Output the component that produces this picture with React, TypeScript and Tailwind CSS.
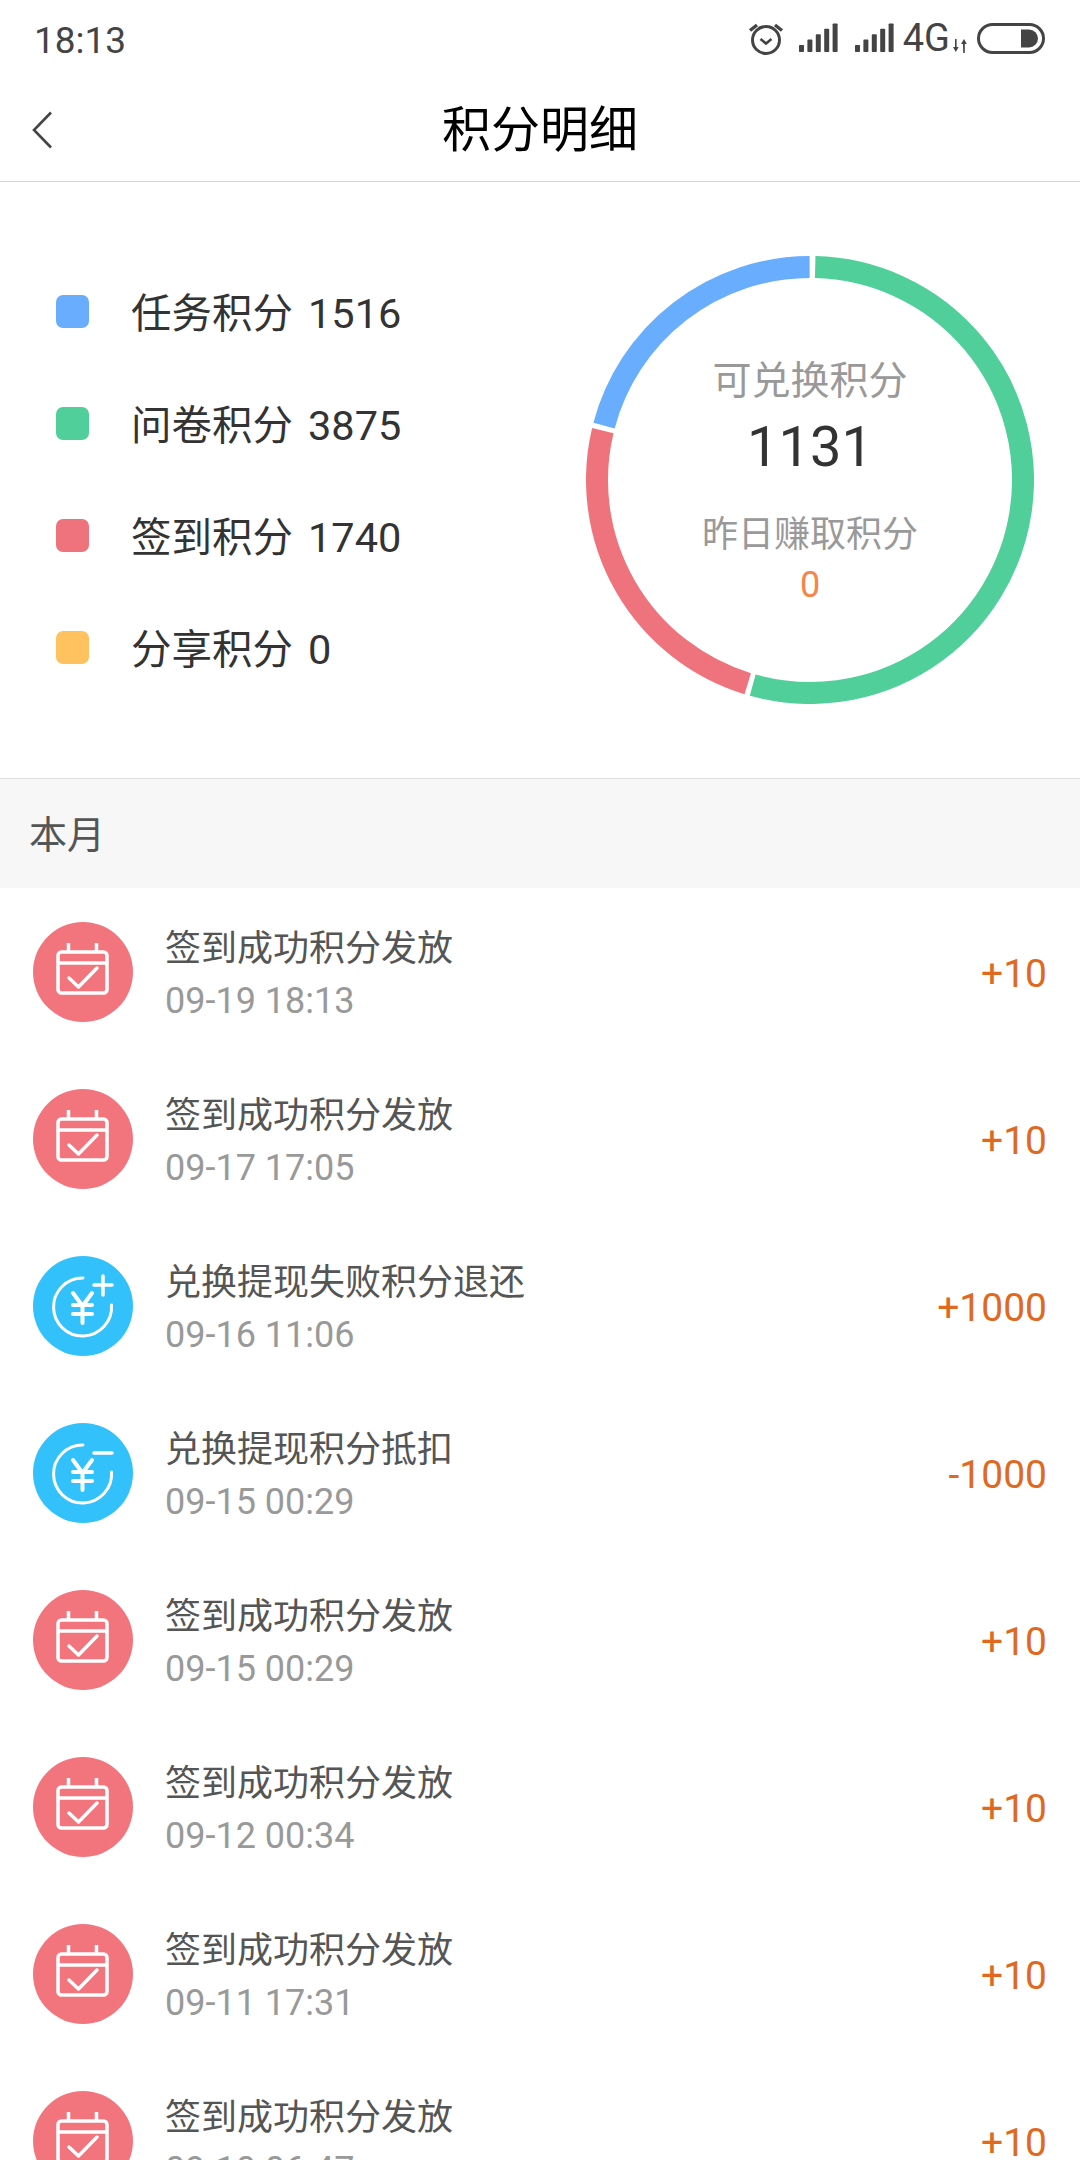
import { Fragment } from 'react'

const legend = [
  { label: '任务积分', value: '1516', color: 'bg-[#69adff]' },
  { label: '问卷积分', value: '3875', color: 'bg-[#50cf9b]' },
  { label: '签到积分', value: '1740', color: 'bg-[#ee737c]' },
  { label: '分享积分', value: '0', color: 'bg-[#ffc25f]' }
]

type Kind = 'sign' | 'plus' | 'minus'
interface Row { kind: Kind; title: string; time: string; amount: string }

const rows: Row[] = [
  { kind: 'sign', title: '签到成功积分发放', time: '09-19 18:13', amount: '+10' },
  { kind: 'sign', title: '签到成功积分发放', time: '09-17 17:05', amount: '+10' },
  { kind: 'plus', title: '兑换提现失败积分退还', time: '09-16 11:06', amount: '+1000' },
  { kind: 'minus', title: '兑换提现积分抵扣', time: '09-15 00:29', amount: '-1000' },
  { kind: 'sign', title: '签到成功积分发放', time: '09-15 00:29', amount: '+10' },
  { kind: 'sign', title: '签到成功积分发放', time: '09-12 00:34', amount: '+10' },
  { kind: 'sign', title: '签到成功积分发放', time: '09-11 17:31', amount: '+10' },
  { kind: 'sign', title: '签到成功积分发放', time: '09-10 06:47', amount: '+10' }
]

function polar(r: number, deg: number) {
  const a = (deg * Math.PI) / 180
  return `${224 + r * Math.sin(a)} ${224 - r * Math.cos(a)}`
}

function arc(from: number, to: number) {
  const big = to - from > 180 ? 1 : 0
  return `M${polar(213, from)} A213 213 0 ${big} 1 ${polar(213, to)}`
}

function Ring() {
  return (
    <svg width="448" height="448" viewBox="0 0 448 448" fill="none" strokeWidth="22">
      <path d={arc(1.4, 195.6)} stroke="#50cf9b" />
      <path d={arc(197, 283.4)} stroke="#ee737c" />
      <path d={arc(284.8, 359.9)} stroke="#69adff" />
    </svg>
  )
}

function StatusIcons() {
  const bars = [0, 1, 2, 3, 4]
  const signal = (
    <svg width="40" height="30" viewBox="0 0 40 30" fill="#444">
      {bars.map(i => (
        <rect key={i} x={i * 8.4} y={22 - i * 5.4} width="5" height={7 + i * 5.4} rx="0.8" />
      ))}
    </svg>
  )
  return (
    <div className="flex items-center pr-[35px]">
      <svg width="40" height="40" viewBox="0 0 40 40" fill="none" stroke="#444" strokeWidth="3" className="mb-[6px] mr-[13px]">
        <circle cx="20" cy="23" r="13.5" />
        <path d="M14.5 22l5.5 4.5 5.5-4.5" strokeWidth="2.6" />
        <path d="M4 13.5 11 8M36 13.5 29 8" strokeWidth="3.4" />
      </svg>
      <div className="mb-[4px] mr-[16px] flex">{signal}</div>
      <div className="mb-[4px] mr-[8px] flex">{signal}</div>
      <span className="mb-[5px] text-[38px] leading-none text-[#444]">4G</span>
      <svg width="14" height="14" viewBox="0 0 14 14" fill="#444" className="ml-[3px] mt-[11px]">
        <path d="M0 8h2V0h1.6v8h2L2.8 13zM8 5h2l.2 9h1.6V5h2L11 0z" />
      </svg>
      <svg width="68" height="31" viewBox="0 0 68 31" fill="none" className="mb-[4px] ml-[10px]">
        <rect x="1.5" y="1.5" width="65" height="28" rx="14" stroke="#444" strokeWidth="3" />
        <path d="M44 6.500h8a9 9 0 0 1 0 18h-8z" fill="#444" />
      </svg>
    </div>
  )
}

function RowIcon({ kind }: { kind: Kind }) {
  if (kind === 'sign') {
    return (
      <div className="h-[100px] w-[100px] shrink-0 rounded-full bg-[#f2757e]">
        <svg width="100" height="100" viewBox="0 0 100 100" fill="none" stroke="#fff" strokeWidth="3.500">
          <rect x="25" y="30" width="49" height="41" rx="3.500" />
          <path d="M25 41h49M35.500 21v9M63.500 21v9" />
          <path d="M36 56l9.500 9L64 46" strokeLinecap="round" strokeLinejoin="round" />
        </svg>
      </div>
    )
  }
  return (
    <div className="h-[100px] w-[100px] shrink-0 rounded-full bg-[#33c1fb]">
      <svg width="100" height="100" viewBox="0 0 100 100" fill="none" stroke="#fff" strokeWidth="3.500" strokeLinecap="round">
        <path d="M50 22A29 29 0 1 0 78.500 49" strokeWidth="3" />
        <path d="M40 37l9.500 13L59 37M40 49h19M40 58h19M49.500 50v17" strokeWidth="4" />
        {kind === 'plus' ? <path d="M61 29h18M70 20v19" /> : <path d="M61 30h18" />}
      </svg>
    </div>
  )
}

export default function App() {
  return (
    <div className="h-[2160px] w-[1080px] overflow-hidden bg-white font-['Roboto','Noto_Sans_CJK_SC',sans-serif]">
      <div className="flex h-[80px] items-center justify-between pl-[34px]">
        <span className="text-[37px] leading-none text-[#444]">18:13</span>
        <StatusIcons />
      </div>
      <div className="relative flex h-[102px] items-center justify-center border-b border-[#d6d6d6]">
        <svg width="24" height="38" viewBox="0 0 24 38" fill="none" stroke="#444" strokeWidth="2.600" className="absolute left-[31px] top-[31px]">
          <path d="M20 1.500 3 19l17 17.500" />
        </svg>
        <h1 className="text-[49px] font-normal leading-none text-black">积分明细</h1>
      </div>

      <div className="flex h-[596px] items-center justify-between pl-[56px] pr-[46px]">
        <div className="mt-[4px] flex flex-col gap-[52px]">
          {legend.map(l => (
            <div key={l.label} className="flex h-[60px] items-center">
              <span className={`mb-[6px] h-[33px] w-[33px] rounded-[7px] ${l.color}`}></span>
              <span className="ml-[42px] text-[40.5px] leading-none text-[#333]">{l.label}</span>
              <span className="ml-[15px] text-[41.5px] leading-none text-[#333]">{l.value}</span>
            </div>
          ))}
        </div>
        <div className="relative h-[448px] w-[448px]">
          <Ring />
          <div className="absolute inset-0 flex flex-col items-center pt-[101px]">
            <span className="h-[48px] text-[39px] leading-[48px] text-[#999]">可兑换积分</span>
            <span className="mt-[10px] h-[64px] text-[56px] leading-[64px] text-[#333]">1131</span>
            <span className="mt-[34px] h-[44px] text-[36px] leading-[44px] text-[#999]">昨日赚取积分</span>
            <span className="mt-[6px] text-[36px] leading-[44px] text-[#f5854a]">0</span>
          </div>
        </div>
      </div>

      <div className="flex h-[110px] items-center border-t border-[#dcdcdc] bg-[#f7f7f7] pl-[29px] pt-[3px]">
        <span className="text-[38px] leading-none text-[#555]">本月</span>
      </div>

      <div className="flex flex-col">
        {rows.map((r, i) => (
          <Fragment key={i}>
            <div className="flex h-[167px] shrink-0 items-center pl-[33px] pr-[33px]">
              <RowIcon kind={r.kind} />
              <div className="ml-[32px] flex flex-1 flex-col pt-[6px]">
                <span className="h-[50px] text-[36px] leading-[50px] text-[#555]">{r.title}</span>
                <span className="mt-[2px] h-[50px] text-[36px] leading-[50px] text-[#999]">{r.time}</span>
              </div>
              <span className="pt-[5px] text-[39px] leading-none text-[#e0691f]">{r.amount}</span>
            </div>
          </Fragment>
        ))}
      </div>
    </div>
  )
}
